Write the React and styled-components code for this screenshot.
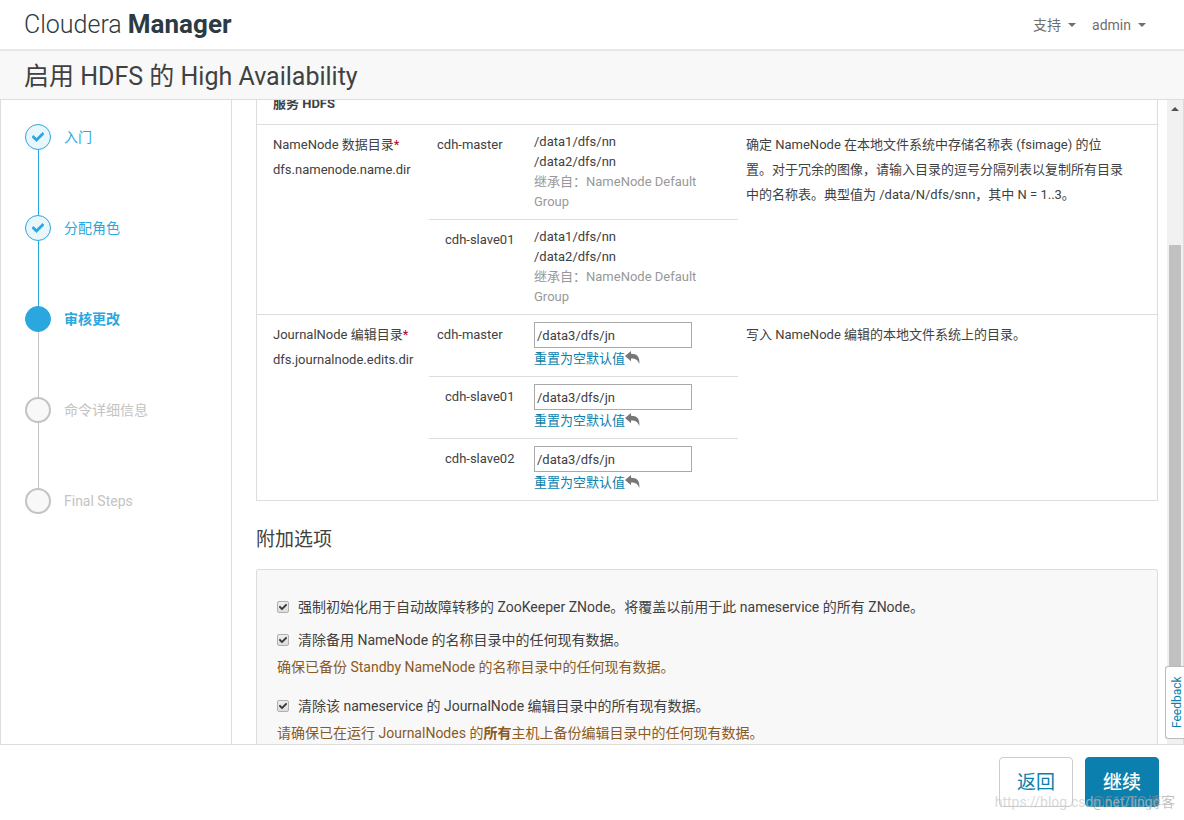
import React from 'react'
import styled, { createGlobalStyle } from 'styled-components';
import { FaCheck } from 'react-icons/fa';

const GlobalStyle = createGlobalStyle`
  * {
    box-sizing: border-box;
  }

  body {
    margin: 0;
    color: #414141;
    background: #fff;
    font-family: Roboto, "Noto Sans CJK SC", sans-serif;
    font-size: 14px;
    line-height: 20px;
  }

  a {
    color: #0b7fad;
    text-decoration: none;
  }
`;

const Page = styled.div`
  display: flex;
  flex-direction: column;
  height: 100vh;
  overflow: hidden;
`;

const Header = styled.header`
  display: flex;
  flex: none;
  justify-content: space-between;
  align-items: center;
  height: 51px;
  padding: 0 38px 0 24px;
  border-bottom: 2px solid #e7e7e7;
`;

const Logo = styled.a`
  color: #2c3a43;
  font-size: 25px;
  font-weight: 300;
  line-height: 32px;

  b {
    font-size: 26px;
    font-weight: 700;
  }
`;

const UserNav = styled.nav`
  display: flex;
  gap: 16px;
`;

const NavButton = styled.button`
  display: flex;
  align-items: center;
  gap: 7px;
  padding: 0;
  border: 0;
  background: none;
  color: #6f6f6f;
  font: inherit;

  &::after {
    content: "";
    border: 4px solid transparent;
    border-top-color: #6f6f6f;
    border-bottom: 0;
  }
`;

const TitleBar = styled.div`
  flex: none;
  padding: 10px 24px 6px;
  border-bottom: 1px solid #ddd;
  background: #f8f8f8;
`;

const Title = styled.h1`
  margin: 0;
  font-size: 25px;
  font-weight: 400;
  line-height: 32px;
`;

const Body = styled.div`
  display: flex;
  flex: 1;
  min-height: 0;
  border: 1px solid #ddd;
  border-top: 0;
`;

const Sidebar = styled.aside`
  flex: none;
  width: 231px;
  padding: 24px;
  border-right: 1px solid #ddd;
`;

const Steps = styled.ol`
  margin: 0;
  padding: 0;
  list-style: none;
`;

const Step = styled.li`
  display: grid;
  grid-template-columns: 26px 1fr;
  column-gap: 13px;
  align-items: center;
  color: ${({ $state }) => ($state === 'todo' ? '#c3c3c3' : '#29a7de')};
  font-weight: ${({ $state }) => ($state === 'current' ? 700 : 400)};

  &:not(:last-child)::after {
    content: "";
    width: 1px;
    height: 65px;
    margin-left: 13px;
    background: ${({ $state }) => ($state === 'done' ? '#29a7de' : '#c3c3c3')};
  }
`;

const circleColors = { done: '#e9f6fc', current: '#29a7de', todo: '#f8f8f8' };

const Circle = styled.span`
  display: flex;
  justify-content: center;
  align-items: center;
  height: 26px;
  border: 1px solid currentColor;
  border-width: ${({ $state }) => ($state === 'todo' ? 2 : 1)}px;
  border-radius: 50%;
  background: ${({ $state }) => circleColors[$state]};

  svg {
    stroke: currentColor;
    stroke-width: 24;
  }
`;

const Content = styled.main`
  flex: 1;
  min-width: 0;
  overflow: hidden;
  padding: 0 9px 0 24px;
`;

const ConfigTable = styled.table`
  width: 100%;
  margin-top: -18px;
  border: 1px solid #ddd;
  border-bottom: 0;
  border-spacing: 0;
  table-layout: fixed;
  font-size: 13px;
`;

const Cell = styled.td`
  padding: 7px 8px 0;
  border-bottom: 1px solid #ddd;
  line-height: 25px;
  vertical-align: top;
`;

const GroupCell = styled.th`
  padding: 8px 16px;
  border-bottom: 1px solid #ddd;
  line-height: 25px;
  text-align: left;
`;

const NameCell = styled(Cell)`
  padding-left: 16px;
  padding-right: 0;
  white-space: nowrap;
`;

const HostCell = styled(Cell)`
  padding-left: ${({ $indent }) => ($indent ? 16 : 8)}px;
  padding-right: 0;
`;

const ValueCell = styled(Cell)`
  padding: 7px 8px;
  line-height: 20px;
`;

const DescriptionCell = styled(Cell)`
  padding-right: 32px;
`;

const Required = styled.span`
  color: #b3002d;
`;

const Inherited = styled.div`
  color: #999;
`;

const PathInput = styled.input`
  display: block;
  width: 158px;
  height: 26px;
  padding: 2px;
  border: 1px solid #aaa;
  color: inherit;
  font: inherit;
`;

const ResetLink = styled.a`
  display: flex;
  line-height: 21px;

  svg {
    margin-top: 3px;
    fill: #777;
  }
`;

const SectionTitle = styled.h2`
  margin: 26px 0 17px;
  font-size: 19px;
  font-weight: 400;
  line-height: 25px;
`;

const Well = styled.section`
  padding: 20px;
  border: 1px solid #ddd;
  border-radius: 2px;
  background: #f8f8f8;
`;

const Option = styled.div`
  padding-top: 7px;
  margin-bottom: 6px;
`;

const CheckLabel = styled.label`
  display: flex;
  align-items: center;
  gap: 9px;
`;

const Checkbox = styled.input`
  appearance: none;
  width: 12px;
  height: 12px;
  margin: 0;
  border: 1px solid #b0b0b0;
  border-radius: 2px;
  background: linear-gradient(#eee, #ddd);
`;

const CheckBoxWrap = styled.span`
  display: grid;
  place-items: center;

  > * {
    grid-area: 1 / 1;
  }

  svg {
    color: #333;
    stroke: #333;
    stroke-width: 30;
    pointer-events: none;
  }
`;

const Hint = styled.p`
  margin: 7px 0 12px;
  color: #8a5a24;
`;

const Scrollbar = styled.div`
  display: flex;
  flex: none;
  flex-direction: column;
  align-items: center;
  width: 16px;
  background: #f1f1f1;

  &::before {
    content: "";
    margin: 7px 0 134px;
    border: 4px solid transparent;
    border-top: 0;
    border-bottom-color: #505050;
  }
`;

const Thumb = styled.div`
  width: 12px;
  height: 430px;
  background: #c1c1c1;
`;

const Feedback = styled.button`
  position: absolute;
  right: 0;
  bottom: 81px;
  width: 19px;
  height: 73px;
  padding: 0 0 0 4px;
  border: 1px solid #bbb;
  border-right: 0;
  border-radius: 3px 0 0 3px;
  background: #fff;
  color: #0b7fad;
  font: inherit;
  font-size: 12px;
  line-height: 14px;
  writing-mode: vertical-rl;

  span {
    display: block;
    transform: rotate(180deg);
  }
`;

const Footer = styled.footer`
  display: flex;
  flex: none;
  justify-content: flex-end;
  gap: 12px;
  height: 75px;
  padding: 12px 25px 0 0;
`;

const Button = styled.button`
  height: 50px;
  padding: 2px 17px 0;
  border: 1px solid ${({ $primary }) => ($primary ? '#0b7fad' : '#ccc')};
  border-radius: 4px;
  background: ${({ $primary }) => ($primary ? '#0b7fad' : '#fff')};
  color: ${({ $primary }) => ($primary ? '#fff' : '#0b7fad')};
  font: inherit;
  font-size: 19px;
  font-weight: ${({ $primary }) => ($primary ? 500 : 400)};
`;

const Watermark = styled.span`
  position: absolute;
  right: ${({ $right }) => $right}px;
  bottom: 8px;
  color: ${({ $color }) => $color};
  font-size: 14px;
  pointer-events: none;
`;

const steps = [
  { label: '入门', state: 'done' },
  { label: '分配角色', state: 'done' },
  { label: '审核更改', state: 'current' },
  { label: '命令详细信息', state: 'todo' },
  { label: 'Final Steps', state: 'todo' },
];

const properties = [
  {
    name: 'NameNode 数据目录',
    key: 'dfs.namenode.name.dir',
    hosts: ['cdh-master', 'cdh-slave01'],
    inherited: ['/data1/dfs/nn', '/data2/dfs/nn'],
    description:
      '确定 NameNode 在本地文件系统中存储名称表 (fsimage) 的位置。对于冗余的图像，请输入目录的逗号分隔列表以复制所有目录中的名称表。典型值为 /data/N/dfs/snn，其中 N = 1..3。',
  },
  {
    name: 'JournalNode 编辑目录',
    key: 'dfs.journalnode.edits.dir',
    hosts: ['cdh-master', 'cdh-slave01', 'cdh-slave02'],
    value: '/data3/dfs/jn',
    description: '写入 NameNode 编辑的本地文件系统上的目录。',
  },
];

const options = [
  { label: '强制初始化用于自动故障转移的 ZooKeeper ZNode。将覆盖以前用于此 nameservice 的所有 ZNode。' },
  {
    label: '清除备用 NameNode 的名称目录中的任何现有数据。',
    hint: '确保已备份 Standby NameNode 的名称目录中的任何现有数据。',
  },
  {
    label: '清除该 nameservice 的 JournalNode 编辑目录中的所有现有数据。',
    hint: <>请确保已在运行 JournalNodes 的<b>所有</b>主机上备份编辑目录中的任何现有数据。</>,
  },
];

const UndoIcon = () => (
  <svg width="15" height="13" viewBox="0 0 15 13" aria-hidden="true">
    <path d="M0 5 6 0v2.7c6 0 9 2.8 8.3 10.3C12.8 9 11 7.4 6 7.4v2.8Z" />
  </svg>
)

const PropertyValue = ({ property, host }) => {
  if (property.inherited) {
    return (
      <>
        {property.inherited.map((path) => <div key={path}>{path}</div>)}
        <Inherited>继承自：NameNode Default Group</Inherited>
      </>
    )
  }

  return (
    <>
      <PathInput aria-label={`${property.name} ${host}`} defaultValue={property.value} />
      <ResetLink href="#reset">重置为空默认值<UndoIcon /></ResetLink>
    </>
  )
}

const App = () => {
  return (
    <Page>
      <GlobalStyle />
      <Header>
        <Logo href="#home">Cloudera <b>Manager</b></Logo>
        <UserNav>
          <NavButton>支持</NavButton>
          <NavButton>admin</NavButton>
        </UserNav>
      </Header>

      <TitleBar>
        <Title>启用 HDFS 的 High Availability</Title>
      </TitleBar>

      <Body>
        <Sidebar>
          <Steps>
            {steps.map(({ label, state }) => (
              <Step key={label} $state={state}>
                <Circle $state={state}>{state === 'done' && <FaCheck size={12} />}</Circle>
                <span>{label}</span>
              </Step>
            ))}
          </Steps>
        </Sidebar>

        <Content>
          <ConfigTable>
            <colgroup>
              <col width="172" />
              <col width="97" />
              <col width="212" />
              <col />
            </colgroup>
            <thead>
              <tr>
                <GroupCell colSpan={4}>服务 HDFS</GroupCell>
              </tr>
            </thead>
            {properties.map((property) => (
              <tbody key={property.key}>
                {property.hosts.map((host, i) => (
                  <tr key={host}>
                    {i === 0 && (
                      <NameCell rowSpan={property.hosts.length}>
                        {property.name}<Required>*</Required><br />
                        {property.key}
                      </NameCell>
                    )}
                    <HostCell $indent={i > 0}>{host}</HostCell>
                    <ValueCell><PropertyValue property={property} host={host} /></ValueCell>
                    {i === 0 && (
                      <DescriptionCell rowSpan={property.hosts.length}>{property.description}</DescriptionCell>
                    )}
                  </tr>
                ))}
              </tbody>
            ))}
          </ConfigTable>

          <SectionTitle>附加选项</SectionTitle>
          <Well>
            {options.map(({ label, hint }) => (
              <Option key={label}>
                <CheckLabel>
                  <CheckBoxWrap>
                    <Checkbox type="checkbox" defaultChecked />
                    <FaCheck size={8} />
                  </CheckBoxWrap>
                  {label}
                </CheckLabel>
                {hint && <Hint>{hint}</Hint>}
              </Option>
            ))}
          </Well>
        </Content>

        <Scrollbar>
          <Thumb />
        </Scrollbar>
      </Body>

      <Footer>
        <Button>返回</Button>
        <Button $primary>继续</Button>
      </Footer>

      <Feedback><span>Feedback</span></Feedback>
      <Watermark $right={24} $color="rgba(200, 200, 200, 0.7)">https://blog.csdn.net/lingc</Watermark>
      <Watermark $right={9} $color="rgba(150, 150, 150, 0.6)">@51CTO博客</Watermark>
    </Page>
  )
}

export default App
